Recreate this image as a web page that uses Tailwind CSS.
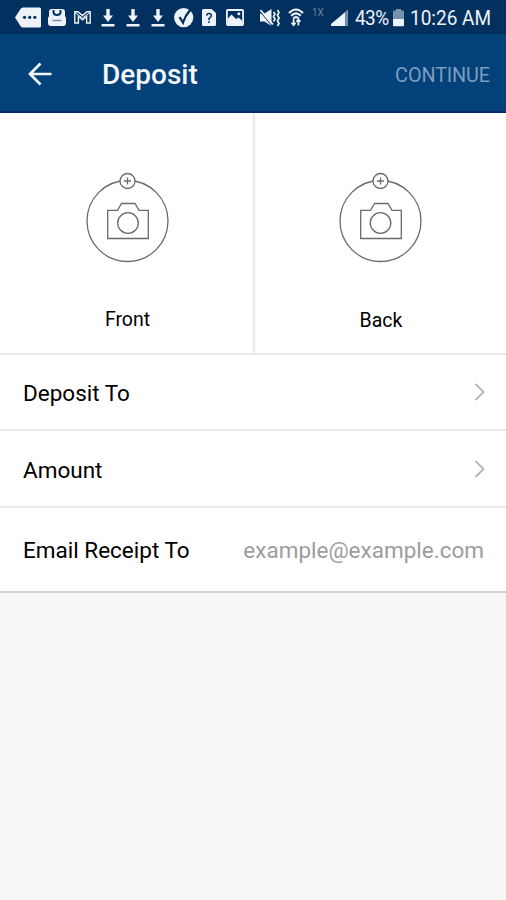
<!DOCTYPE html>
<html lang="en">
<head>
  <meta charset="UTF-8">
  <meta name="viewport" content="width=device-width, initial-scale=1.0">
  <title>Deposit</title>
  <script src="https://cdn.jsdelivr.net/npm/@tailwindcss/browser@4"></script>
</head>
<body class="bg-[#f6f6f6] text-black font-['Roboto',sans-serif] h-screen overflow-hidden">

  <!-- Status bar -->
  <div class="flex items-start h-[34px] pl-[15px] bg-[#03315f] text-[#eef3fa]">
    <svg class="shrink-0 w-[26px] h-[34px]" viewBox="0 0 26 34" fill="none">
      <path d="M8 7.500H24.500Q26 7.500 26 9V26Q26 27.500 24.500 27.500H8Q6.500 27.500 5.500 26L0 17.500L5.500 9Q6.500 7.500 8 7.500Z" fill="currentColor"/>
      <g fill="#03315f"><circle cx="9.500" cy="17.300" r="1.600"/><circle cx="14.700" cy="17.300" r="1.600"/><circle cx="19.900" cy="17.300" r="1.600"/></g>
    </svg>
    <svg class="shrink-0 w-[18px] h-[34px] ml-[7px]" viewBox="0 0 18 34" fill="none">
      <path d="M4 9H14Q17 9 17 12V16L18 18V23Q18 26 15 26H3Q0 26 0 23V18L1 16V12Q1 9 4 9Z" fill="currentColor"/>
      <path d="M5.500 10V12Q5.500 15 9 15T12.500 12V10" stroke="#03315f" stroke-width="2"/>
      <path d="M4.500 20.500H13.500" stroke="#7890ad" stroke-width="1.500"/>
    </svg>
    <svg class="shrink-0 w-[17px] h-[34px] ml-[8px]" viewBox="0 0 17 34" fill="none" stroke="currentColor">
      <path d="M.8 11.800H4L8.500 15.600L13 11.800H16.200V23H12.600V16.500L8.500 19.800L4.400 16.500V23H.8Z" stroke-width="1.400"/>
      <path d="M1 12.500L8.500 18L16 12.500" stroke-width="1"/>
    </svg>
    <svg class="shrink-0 w-[14px] h-[34px] ml-[10px]" viewBox="0 0 14 34" fill="currentColor">
      <path d="M5.300 9H8.700V15.500H12L7 22L2 15.500H5.300Z"/><path d="M.5 24H13.500V26.500H.5Z"/>
    </svg>
    <svg class="shrink-0 w-[14px] h-[34px] ml-[11px]" viewBox="0 0 14 34" fill="currentColor">
      <path d="M5.300 9H8.700V15.500H12L7 22L2 15.500H5.300Z"/><path d="M.5 24H13.500V26.500H.5Z"/>
    </svg>
    <svg class="shrink-0 w-[14px] h-[34px] ml-[11px]" viewBox="0 0 14 34" fill="currentColor">
      <path d="M5.300 9H8.700V15.500H12L7 22L2 15.500H5.300Z"/><path d="M.5 24H13.500V26.500H.5Z"/>
    </svg>
    <svg class="shrink-0 w-[20px] h-[34px] ml-[9px]" viewBox="0 0 20 34" fill="none">
      <circle cx="9.700" cy="17.600" r="9.600" fill="currentColor"/>
      <path d="M5.500 17L9 22.500Q11 16 16.500 9.500" stroke="#03315f" stroke-width="2.300"/>
    </svg>
    <svg class="shrink-0 w-[14px] h-[34px] ml-[8px]" viewBox="0 0 14 34" fill="none">
      <path d="M1.500 9H9.500L14 13V24.500Q14 26 12.500 26H1.500Q0 26 0 24.500V10.500Q0 9 1.500 9Z" fill="currentColor"/>
      <path d="M4.600 15.600Q4.800 13.600 7 13.600T9.300 15.700Q9.300 17 7 18.400V20.200M7 21.300V23.100" stroke="#03315f" stroke-width="1.500"/>
    </svg>
    <svg class="shrink-0 w-[18px] h-[34px] ml-[10px]" viewBox="0 0 18 34" fill="none">
      <rect x=".9" y="10" width="16.200" height="15" rx="1" stroke="currentColor" stroke-width="1.800"/>
      <path d="M1.500 19L5.500 14.500L10 19L12.500 17.500L16.500 21V24.500H1.500Z" fill="currentColor"/>
      <circle cx="12.800" cy="13.800" r="1.500" fill="currentColor"/>
    </svg>
    <svg class="shrink-0 w-[20px] h-[34px] ml-[16px]" viewBox="0 0 20 34" fill="none">
      <path d="M0 13.500H4.500L11.500 9V26L4.500 21.500H0Z" fill="currentColor"/>
      <path d="M0 11.500L12 26" stroke="#03315f" stroke-width="1"/>
      <path d="M.5 10L13 24.500" stroke="currentColor" stroke-width="1.600"/>
      <path d="M13.500 12L15 14L13.500 16.500L15 19L13.500 21.500M17.500 10L19 12.500L17.500 15L19 18L17.500 21L19 23.500L17.500 26" stroke="currentColor" stroke-width="1.700"/>
    </svg>
    <svg class="shrink-0 w-[16px] h-[34px] ml-[8px]" viewBox="0 0 16 34" fill="none">
      <path d="M1 13Q8 6 15 13M3.200 15.800Q8 11 12.800 15.800M5.200 18.400Q8 15.800 10.800 18.400" stroke="currentColor" stroke-width="2"/>
      <path d="M5.600 19V25M3.600 22.800L5.600 25.200L7.600 22.800M10.400 25.500V19.500M8.400 21.800L10.400 19.400L12.400 21.800" stroke="currentColor" stroke-width="1.700"/>
    </svg>
    <span class="ml-[8px] mt-[7px] w-[13px] text-[10px] leading-[12px] text-[#6482a3]">1X</span>
    <svg class="shrink-0 w-[18px] h-[34px] ml-[6px]" viewBox="0 0 18 34" fill="currentColor">
      <path d="M0 26V24L3.600 21V26ZM3.600 26V21L7.200 18V26ZM7.200 26V18L10.700 15V26ZM10.700 26V15L14.200 12V26Z"/>
      <path d="M14.200 26V12L17 9.500V26Z" fill="#7890ad"/>
    </svg>
    <span class="ml-[6px] w-[35px] text-[20px] leading-[37px] tracking-[-0.6px] origin-left scale-x-95">43%</span>
    <svg class="shrink-0 w-[11px] h-[34px] ml-[3px]" viewBox="0 0 11 34">
      <path d="M3 9H8V10.500H10Q11 10.500 11 11.500V19H0V11.500Q0 10.500 1 10.500H3Z" fill="#7893ad"/>
      <path d="M0 19H11V25Q11 26.300 10 26.300H1Q0 26.300 0 25Z" fill="currentColor"/>
    </svg>
    <span class="ml-[6px] whitespace-nowrap text-[20px] leading-[37px] origin-left scale-x-95">10:26 AM</span>
  </div>

  <!-- App bar -->
  <header class="flex items-center h-[79px] bg-[#03417a] border-b-2 border-[#042a62] pl-[28px] pr-[16px] pt-[3px] text-[#f3f7fc]">
    <svg class="w-[24px] h-[24px]" viewBox="0 0 24 24" fill="none" stroke="currentColor" stroke-width="2.700">
      <path d="M23.500 12H2M12.500 1.500L2 12L12.500 22.500"/>
    </svg>
    <h1 class="ml-[50px] pt-[2px] text-[28px] leading-8 font-medium">Deposit</h1>
    <button class="ml-auto pt-[3px] text-[19.800px] leading-8 tracking-[-0.1px] text-[#7d9dbd]">CONTINUE</button>
  </header>

  <!-- Check photos -->
  <div class="grid grid-cols-[255px_1fr] h-[242px] bg-white border-b-2 border-[#e9e9e9]">
    <div class="flex flex-col items-center border-r-2 border-[#e9e9e9] pt-[59px] pl-[2px]">
      <svg class="w-[84px] h-[92px]" viewBox="0 0 84 92" fill="none" stroke="#6b6b6b" stroke-width="1.300">
        <circle cx="41.500" cy="49" r="40.500"/>
        <path d="M21.700 38.300H31.500L35.500 31.500H49L53 38.300H62.300V66.500H21.700Z"/>
        <circle cx="42" cy="51" r="10.300"/>
        <circle cx="41.500" cy="9" r="7.500" fill="#fff"/>
        <path d="M38 9H45M41.500 5.500V12.500"/>
      </svg>
      <span class="mt-[44px] text-[19.500px] leading-6">Front</span>
    </div>
    <div class="flex flex-col items-center pt-[59px] pl-px">
      <svg class="w-[84px] h-[92px]" viewBox="0 0 84 92" fill="none" stroke="#6b6b6b" stroke-width="1.300">
        <circle cx="41.500" cy="49" r="40.500"/>
        <path d="M21.700 38.300H31.500L35.500 31.500H49L53 38.300H62.300V66.500H21.700Z"/>
        <circle cx="41.500" cy="51" r="10.300"/>
        <circle cx="41.500" cy="9" r="7.500" fill="#fff"/>
        <path d="M38 9H45M41.500 5.500V12.500"/>
      </svg>
      <span class="mt-[45px] text-[19.500px] leading-6">Back</span>
    </div>
  </div>

  <!-- Deposit details -->
  <div class="bg-white text-[22.500px] leading-8">
    <div class="flex items-center justify-between h-[76px] pl-[23px] pr-[21px] border-b-2 border-[#e9e9e9]">
      <span class="pt-px">Deposit To</span>
      <svg class="w-[11px] h-[18px]" viewBox="0 0 11 18" fill="none" stroke="#b5b5b5" stroke-width="1.800"><path d="M1.500 1L9.500 9L1.500 17"/></svg>
    </div>
    <div class="flex items-center justify-between h-[77px] pl-[23px] pr-[21px] border-b-2 border-[#ececec]">
      <span class="pt-[3px]">Amount</span>
      <svg class="w-[11px] h-[18px]" viewBox="0 0 11 18" fill="none" stroke="#b5b5b5" stroke-width="1.800"><path d="M1.500 1L9.500 9L1.500 17"/></svg>
    </div>
    <div class="flex items-center justify-between h-[85px] pl-[23px] pr-[22px] pt-px border-b-2 border-[#d2d2d2]">
      <span>Email Receipt To</span>
      <span class="text-[#9c9c9c]">example@example.com</span>
    </div>
  </div>

</body>
</html>
